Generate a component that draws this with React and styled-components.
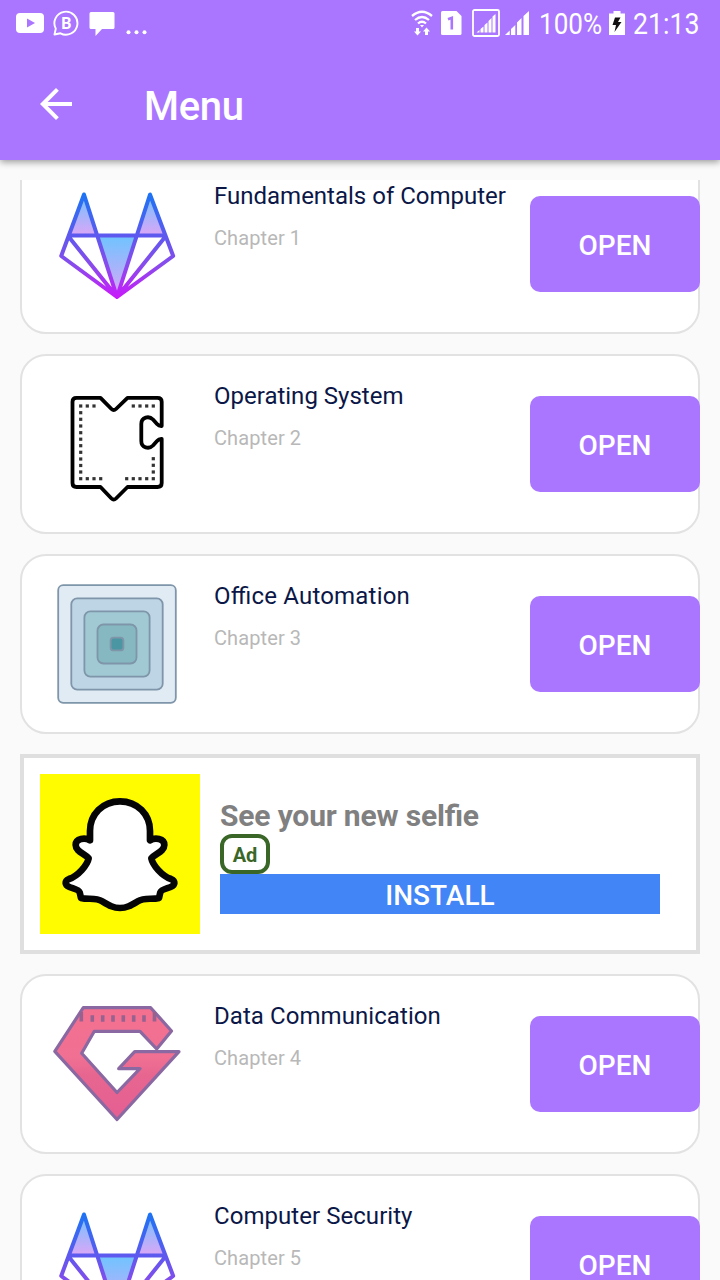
import React from "react";
import styled, { createGlobalStyle } from "styled-components";
import { MdArrowBack } from "react-icons/md";

const GlobalStyle = createGlobalStyle`
  * {
    box-sizing: border-box;
  }

  body {
    margin: 0;
    background: #fafafa;
    font-family: Roboto, sans-serif;
  }
`;

const Screen = styled.div`
  display: flex;
  flex-direction: column;
  width: 720px;
  height: 1280px;
  overflow: hidden;
  background: #fafafa;
`;

const Header = styled.header`
  flex: none;
  height: 160px;
  background: #aa76ff;
  color: #fff;
  box-shadow: 0 2px 7px rgba(0, 0, 0, 0.4);
`;

const StatusBar = styled.div`
  display: flex;
  justify-content: space-between;
  height: 48px;
  padding: 0 20px 0 16px;
`;

const StatusGroup = styled.div`
  display: flex;
  align-items: center;
  height: 46px;
`;

const StatusIcon = styled.svg`
  flex: none;
  display: block;
  margin-left: ${(props) => props.$gap || 0}px;
`;

const StatusText = styled.span`
  display: block;
  width: ${(props) => props.$width}px;
  margin-left: ${(props) => props.$gap}px;
  padding-top: 1px;
  font-size: 30px;
  line-height: 46px;
  white-space: nowrap;

  span {
    display: inline-block;
    transform: scaleX(${(props) => props.$squeeze});
    transform-origin: left center;
  }
`;

const Toolbar = styled.div`
  display: flex;
  align-items: center;
  height: 112px;
  padding-left: 32px;
`;

const BackButton = styled.button`
  display: flex;
  padding: 0;
  border: none;
  background: none;
  color: #fff;
  font-size: 48px;
`;

const Title = styled.h1`
  margin: 6px 0 0 64px;
  font-size: 40px;
  font-weight: 500;
  letter-spacing: -0.3px;
  line-height: 48px;
`;

const List = styled.main`
  flex: 1;
  margin-top: 20px;
  overflow: hidden;
`;

const ListContent = styled.div`
  display: flex;
  flex-direction: column;
  gap: 20px;
  margin-top: -26px;
  padding: 0 20px;
`;

const Card = styled.article`
  display: flex;
  flex: none;
  height: 180px;
  padding: 24px 0 0 31px;
  border: 2px solid #e2e2e2;
  border-radius: 26px;
  background: #fff;
`;

const CardIcon = styled.svg`
  flex: none;
  display: block;
  width: 128px;
  height: 128px;
`;

const CardText = styled.div`
  flex: 1;
  padding-left: 33px;
  white-space: nowrap;
`;

const CardTitle = styled.h2`
  margin: 0;
  color: #0b1747;
  font-size: 24px;
  font-weight: 400;
  letter-spacing: ${(props) => props.$spacing || 0}px;
  font-feature-settings: "liga" 1;
  line-height: 32px;
`;

const Chapter = styled.p`
  margin: 14px 0 0;
  color: #b8b8b8;
  font-size: 20px;
  letter-spacing: 0.1px;
  line-height: 24px;
`;

const OpenButton = styled.button`
  flex: none;
  width: 170px;
  height: 96px;
  margin: 16px -2px 0 0;
  padding: 2px 0 0;
  border: none;
  border-radius: 10px;
  background: #aa76ff;
  color: #fff;
  font-family: inherit;
  font-size: 28px;
  font-weight: 500;
`;

const AdCard = styled.aside`
  display: flex;
  flex: none;
  height: 200px;
  padding: 16px 36px 16px 16px;
  border: 4px solid #dfdfdf;
  background: #fff;
`;

const AdImage = styled.svg`
  flex: none;
  display: block;
  width: 160px;
  height: 160px;
  background: #fffc00;
`;

const AdBody = styled.div`
  display: flex;
  flex: 1;
  flex-direction: column;
  align-items: flex-start;
  padding: 24px 0 0 20px;
`;

const AdTitle = styled.strong`
  color: #808080;
  font-size: 30px;
  font-weight: 700;
  letter-spacing: -0.17px;
  font-feature-settings: "liga" 1;
  line-height: 36px;
`;

const AdBadge = styled.span`
  width: 50px;
  height: 40px;
  border: 4px solid #3a6728;
  border-radius: 12px;
  color: #3a6728;
  font-size: 20px;
  font-weight: 700;
  line-height: 35px;
  text-align: center;
`;

const InstallButton = styled.button`
  width: 100%;
  height: 40px;
  padding: 2px 0 0;
  border: none;
  background: #4285f6;
  color: #fff;
  font-family: inherit;
  font-size: 28px;
  font-weight: 500;
`;

const FoxIcon = ({ id }) => (
  <CardIcon viewBox="0 0 128 128">
    <defs>
      <linearGradient id={`${id}-line`} gradientUnits="userSpaceOnUse" x1="0" y1="13" x2="0" y2="117">
        <stop offset="0" stopColor="#1b74f4" />
        <stop offset="0.42" stopColor="#5f58ee" />
        <stop offset="0.7" stopColor="#8a4bec" />
        <stop offset="1" stopColor="#c81bfa" />
      </linearGradient>
      <linearGradient id={`${id}-fill`} x1="0" y1="0" x2="0" y2="1">
        <stop offset="0" stopColor="#6ec4ff" />
        <stop offset="1" stopColor="#dba6f7" />
      </linearGradient>
    </defs>
    <g fill={`url(#${id}-fill)`}>
      <path d="M31 14 15.500 55.500H44.500Z" />
      <path d="M97 14 83.500 55.500H112.500Z" />
      <path d="M44.500 55.500H83.500L64 117Z" />
    </g>
    <path
      d="M31 14.500 8.200 76 64 117 120.200 76 97 14.500 64 117ZM15.500 56.500 64 117 112.500 56.500M15 55.600H113"
      fill="none"
      stroke={`url(#${id}-line)`}
      strokeWidth="4"
      strokeLinejoin="round"
    />
  </CardIcon>
);

const stitches = [
  ...[27.7, 34.3, 41, 80.3, 87, 93.7, 100.3].map((x) => [x, 26]),
  ...[32.7, 39.3, 46, 52.7, 59.2, 65.7, 72.3, 79, 85.5, 92].map((y) => [27.7, y]),
  ...[78.7, 85.3, 92].map((y) => [100.3, y]),
  ...[27.7, 34.3, 41, 47.7, 73.7, 80.3, 87, 93.7, 100.3].map((x) => [x, 98.7]),
];

const PuzzleIcon = () => (
  <CardIcon viewBox="0 0 128 128">
    <path
      d="M23.500 17.800H47.500L58.500 29Q60.700 31.200 63 29L74.500 17.800H104.500Q108.700 17.800 108.700 21.800V46Q106 46.200 104 44L100 39.500C96 35.500 88.300 37 88.300 44V61C88.300 68 96 69.500 100 65.500L104 61Q106 58.600 108.700 58.800V103Q108.700 107 104.500 107H74.500L63 118.500Q60.700 120.700 58.500 118.500L47.500 107H23.500Q19.500 107 19.500 103V21.800Q19.500 17.800 23.500 17.800Z"
      fill="none"
      stroke="#000"
      strokeWidth="3.800"
      strokeLinejoin="round"
    />
    {stitches.map(([x, y]) => (
      <rect key={`${x}-${y}`} x={x - 1.6} y={y - 1.6} width="3.200" height="3.200" fill="#333" />
    ))}
  </CardIcon>
);

const SquaresIcon = () => (
  <CardIcon viewBox="0 0 128 128">
    <g stroke="#7f95a9" strokeWidth="1.800">
      <rect x="5.200" y="5.200" width="117.600" height="117.600" rx="5" fill="#e1ebf4" />
      <rect x="18.300" y="18.300" width="91.400" height="91.400" rx="6" fill="#bdd5e5" />
      <rect x="31.400" y="31.400" width="65.200" height="65.200" rx="6" fill="#a0c9d3" />
      <rect x="44.500" y="44.500" width="39" height="39" rx="6" fill="#86b8c1" />
      <rect x="57.600" y="57.600" width="12.800" height="12.800" rx="3" fill="#4b96a3" />
    </g>
  </CardIcon>
);

const GemIcon = () => (
  <CardIcon viewBox="0 0 128 128">
    <defs>
      <linearGradient id="gem" x1="0" y1="0" x2="0" y2="1">
        <stop offset="0" stopColor="#f4708f" />
        <stop offset="0.45" stopColor="#f07093" />
        <stop offset="0.6" stopColor="#e76690" />
        <stop offset="1" stopColor="#e55f92" />
      </linearGradient>
    </defs>
    <path
      d="M30.300 7.700H97.700L118.500 31 103.700 49 87 31.300H41.300L28.700 53.300 64 92.500 87 68.700H65.700L81.700 51.700H126L64 119.500 1.800 51.300Z"
      fill="url(#gem)"
      stroke="#8a68a2"
      strokeWidth="3.200"
      strokeLinejoin="round"
    />
    <path
      d="M28.300 12V21.500M39.300 15.300V21.800M49.700 15.300V21.800M60 15.300V21.800M70.300 15.300V21.800M80.700 15.300V21.800M91 15.300V21.800M101.500 12V21.500"
      stroke="#96628f"
      strokeWidth="3.600"
    />
  </CardIcon>
);

const GhostImage = () => (
  <AdImage viewBox="90 87 480 480">
    <path
      d="M330 169C278 169 240 208 240 258V286C225 277 197 280 197 300C197 320 225 326 236 340C232 360 205 392 177 402C163 408 164 420 178 426C190 431 206 434 209 442L213 459C235 465 255 456 277 469C297 481 310 489 330 489C350 489 363 481 383 469C405 456 425 465 447 459L451 442C454 434 470 431 482 426C496 420 497 408 483 402C455 392 428 360 424 340C435 326 463 320 463 300C463 280 435 277 420 286V258C420 208 382 169 330 169Z"
      fill="#fff"
      stroke="#050505"
      strokeWidth="20"
      strokeLinejoin="round"
    />
  </AdImage>
);

const StatusIcons = () => (
  <StatusBar>
    <StatusGroup>
      <StatusIcon width="28" height="20" viewBox="0 0 28 20">
        <rect width="28" height="20" rx="4" fill="#fff" />
        <path d="M11 5.500V14.500L19 10Z" fill="#aa76ff" />
      </StatusIcon>
      <StatusIcon $gap={9} width="26" height="26" viewBox="0 0 26 26">
        <path
          d="M1.500 24.500 2.800 18.600A11.500 11.500 0 1 1 7.500 23.300Z"
          fill="none"
          stroke="#fff"
          strokeWidth="1.900"
          strokeLinejoin="round"
        />
        <text x="13.300" y="18.500" textAnchor="middle" fontSize="16" fontWeight="700" fill="#fff">
          B
        </text>
      </StatusIcon>
      <StatusIcon $gap={10} width="26" height="26" viewBox="0 0 26 26">
        <path d="M2 2H24Q25.500 2 25.500 3.500V17.500Q25.500 19 24 19H13L6.500 26V19H2Q.500 19 .500 17.500V3.500Q.500 2 2 2Z" fill="#fff" />
      </StatusIcon>
      <StatusIcon $gap={11} width="22" height="26" viewBox="0 0 22 26" fill="#fff">
        <circle cx="2.500" cy="22.300" r="2" />
        <circle cx="10.500" cy="22.300" r="2" />
        <circle cx="18.500" cy="22.300" r="2" />
      </StatusIcon>
    </StatusGroup>
    <StatusGroup>
      <StatusIcon width="22" height="26" viewBox="0 0 22 26">
        <path
          d="M1 6Q11-2.500 21 6M4 10Q11 4 18 10M7 13.500Q11 10 15 13.500"
          fill="none"
          stroke="#fff"
          strokeWidth="2.300"
        />
        <path d="M9 15H13L11 17.500ZM5 18H8V21.500H10L6.500 25.500 3 21.500H5ZM14 25V21.500H12L15.500 17.500 19 21.500H17V25Z" fill="#fff" />
      </StatusIcon>
      <StatusIcon $gap={8} width="21" height="24" viewBox="0 0 21 24">
        <path d="M1.500 0H15.500L20.500 5V22.500Q20.500 24 19 24H1.500Q0 24 0 22.500V1.500Q0 0 1.500 0Z" fill="#fff" />
        <path d="M7 8.300 10.800 6.800V18.500" fill="none" stroke="#aa76ff" strokeWidth="2.600" />
      </StatusIcon>
      <StatusIcon $gap={10} width="28" height="28" viewBox="0 0 28 28">
        <rect x="1" y="1" width="26" height="26" rx="1.500" fill="none" stroke="#fff" strokeWidth="1.800" />
        <path d="M4.500 23.500 7.500 21V23.500ZM8.500 20 11.500 17.500V23.500H8.500ZM12.500 16 15.500 13.500V23.500H12.500ZM16.500 12 19.500 9V23.500H16.500ZM20.500 7.500 23.500 5V23.500H20.500Z" fill="#fff" />
      </StatusIcon>
      <StatusIcon $gap={5} width="24" height="24" viewBox="0 0 24 24">
        <path d="M0 24 4.700 19.500V24ZM6 18 10.300 14V24H6ZM12 11.500 16.500 7V24H12ZM18.500 5 24 0V24H18.500Z" fill="#fff" />
      </StatusIcon>
      <StatusText $gap={10} $width={69} $squeeze={0.87}>
        <span>100%</span>
      </StatusText>
      <StatusIcon $gap={1} width="16" height="24" viewBox="0 0 16 24">
        <path d="M4.500 0H11.500V2.500H16V24H0V2.500H4.500Z" fill="#fff" />
        <path d="M6 6.500H11.500L9 11H12.500L5.500 21 7 14H3.500Z" fill="#111" />
      </StatusIcon>
      <StatusText $gap={8} $width={67} $squeeze={0.89}>
        <span>21:13</span>
      </StatusText>
    </StatusGroup>
  </StatusBar>
);

const ChapterCard = ({ title, chapter, icon, spacing }) => (
  <Card>
    {icon}
    <CardText>
      <CardTitle $spacing={spacing}>{title}</CardTitle>
      <Chapter>Chapter {chapter}</Chapter>
    </CardText>
    <OpenButton>OPEN</OpenButton>
  </Card>
);

const App = () => {
  return (
    <Screen>
      <GlobalStyle />
      <Header>
        <StatusIcons />
        <Toolbar>
          <BackButton aria-label="Back">
            <MdArrowBack />
          </BackButton>
          <Title>Menu</Title>
        </Toolbar>
      </Header>
      <List>
        <ListContent>
          <ChapterCard title="Fundamentals of Computer" chapter={1} icon={<FoxIcon id="fox-a" />} />
          <ChapterCard title="Operating System" chapter={2} icon={<PuzzleIcon />} />
          <ChapterCard title="Office Automation" chapter={3} icon={<SquaresIcon />} spacing={0.2} />
          <AdCard>
            <GhostImage />
            <AdBody>
              <AdTitle>See your new selfie</AdTitle>
              <AdBadge>Ad</AdBadge>
              <InstallButton>INSTALL</InstallButton>
            </AdBody>
          </AdCard>
          <ChapterCard title="Data Communication" chapter={4} icon={<GemIcon />} spacing={0.07} />
          <ChapterCard title="Computer Security" chapter={5} icon={<FoxIcon id="fox-b" />} spacing={0.05} />
        </ListContent>
      </List>
    </Screen>
  );
};

export default App;
